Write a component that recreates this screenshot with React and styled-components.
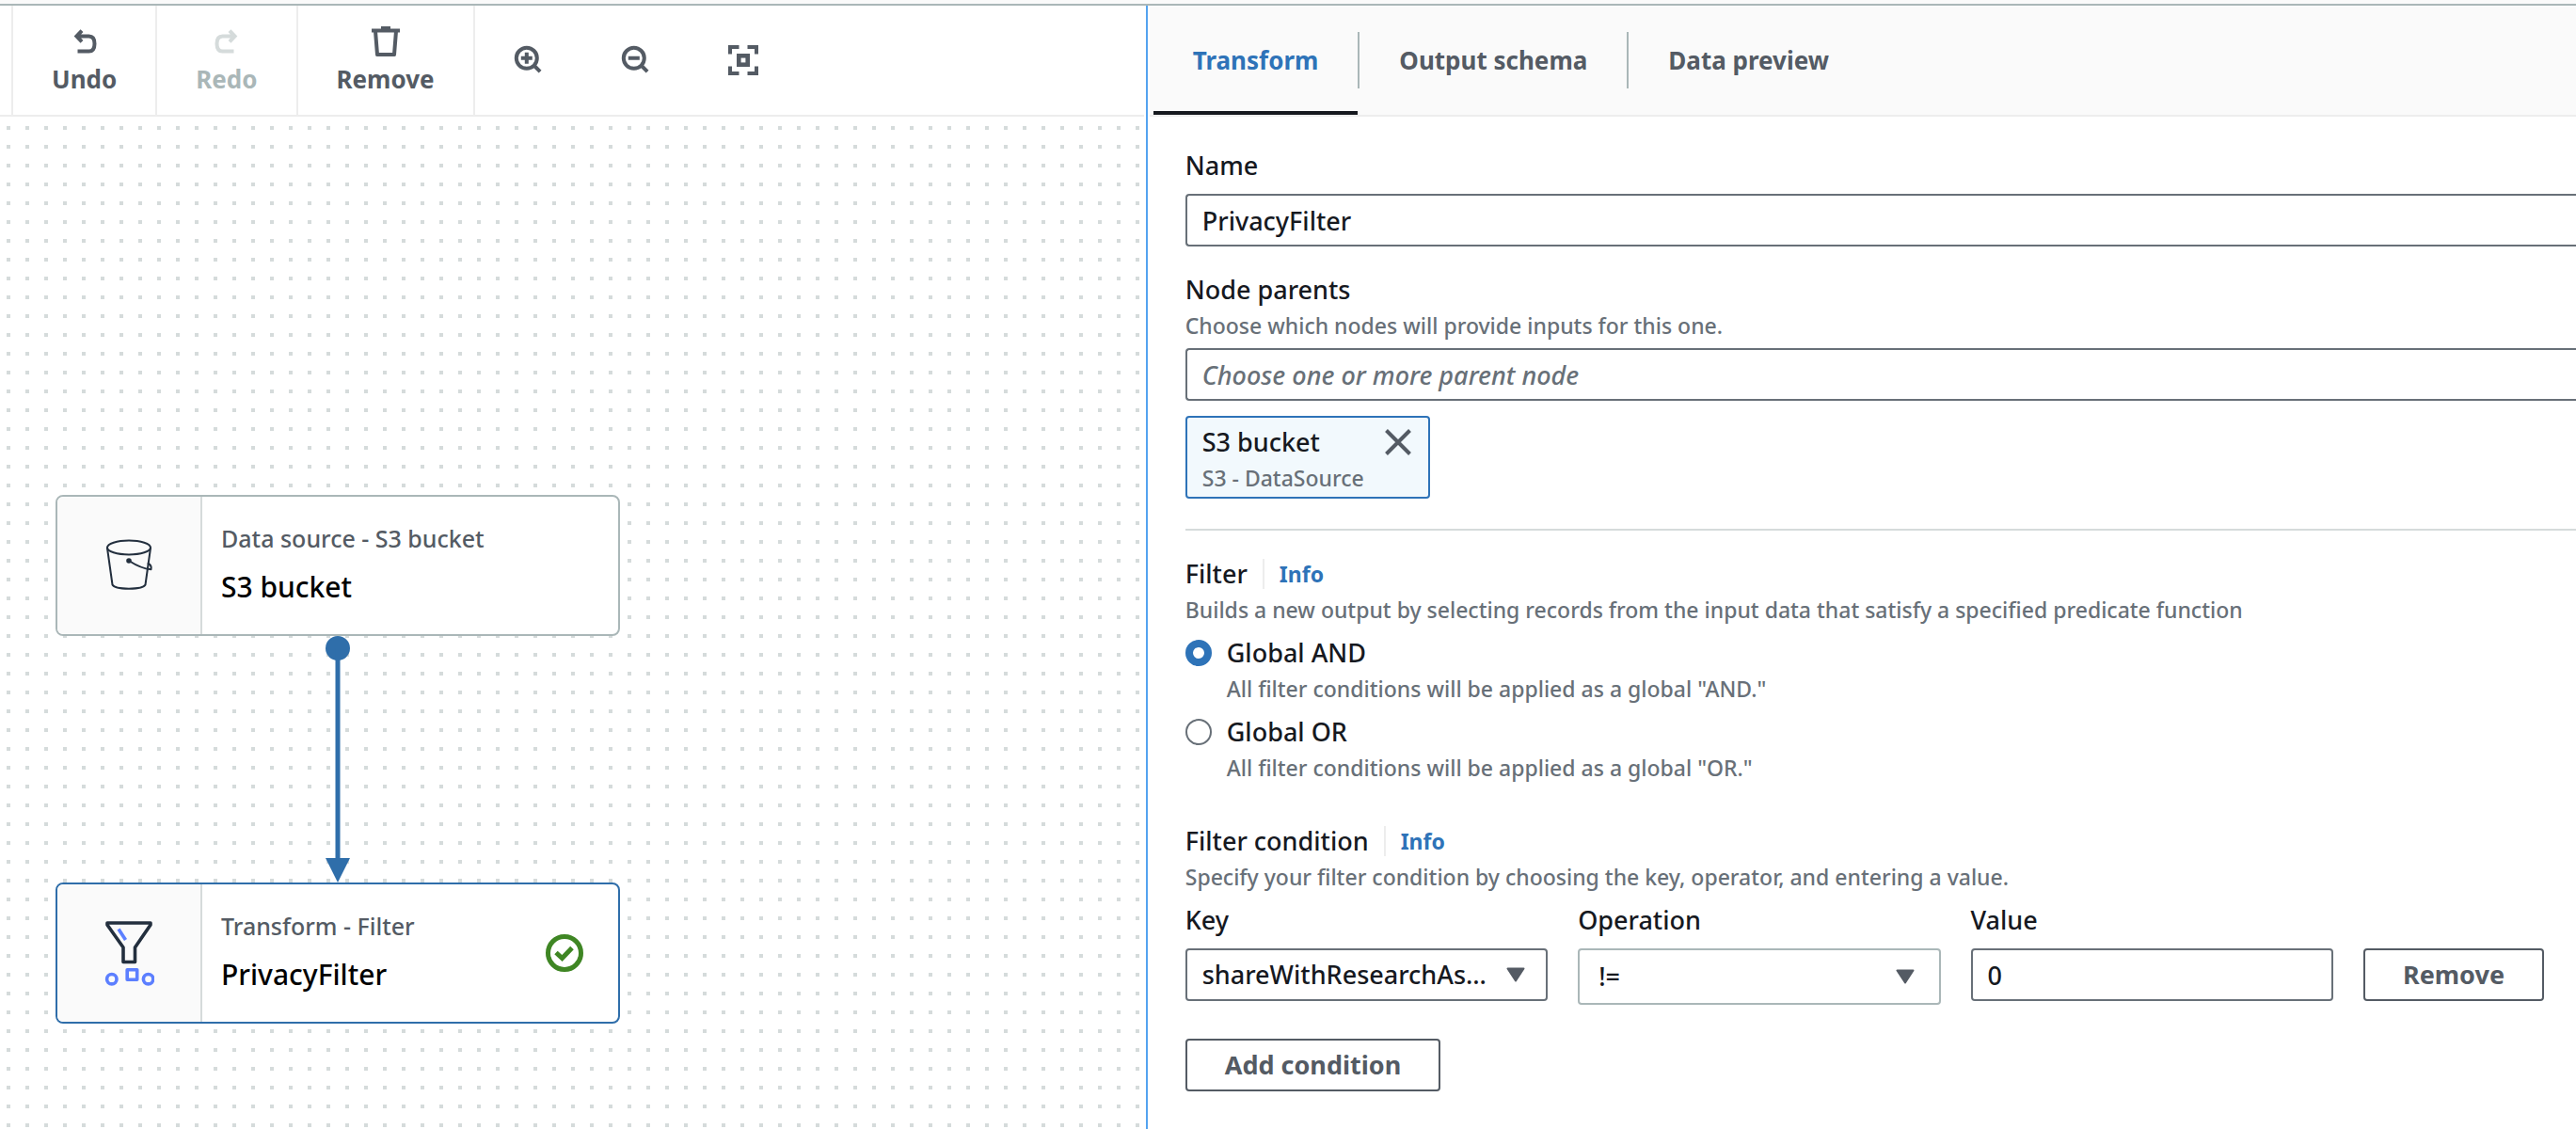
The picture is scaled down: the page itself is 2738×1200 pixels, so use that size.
import React, { useState } from "react";
import styled, { createGlobalStyle, css } from "styled-components";

const color = {
  ink: "#16191f",
  slate: "#545b64",
  hint: "#687078",
  border: "#687078",
  muted: "#aab7b8",
  faint: "#d5dbdb",
  hairline: "#ededed",
  surface: "#fafafa",
  link: "#2e73b8",
  edge: "#2f6eaa",
  success: "#3f8624",
  accent: "#5c7fff",
};

const GlobalStyle = createGlobalStyle`
  *, *::before, *::after { box-sizing: border-box; }
  body {
    margin: 0;
    background: #fff;
    color: ${color.ink};
    font-family: "Noto Sans", "Open Sans", sans-serif;
    font-size: 27px;
    font-weight: 500;
    line-height: 36px;
  }
  button, input, select { margin: 0; font: inherit; color: inherit; }
`;

/* ---------- page frame ---------- */

const Page = styled.div`
  display: flex;
  flex-direction: column;
  min-height: 100vh;
`;

const TopStrip = styled.div`
  height: 6px;
  flex: none;
  background: ${color.surface};
  border-bottom: 2px solid ${color.muted};
`;

const Split = styled.main`
  flex: 1;
  display: grid;
  grid-template-columns: minmax(0, 445fr) 6px minmax(0, 555fr);
`;

const Splitter = styled.div`
  border: solid #fff;
  border-width: 0 2px;
  background: #54a3f0;
`;

const GraphPane = styled.section`
  display: flex;
  flex-direction: column;
`;

const DetailPane = styled.section`
  display: flex;
  flex-direction: column;
  overflow: hidden;
`;

/* ---------- toolbar ---------- */

const Toolbar = styled.div`
  display: flex;
  height: 118px;
  padding-left: 12px;
  border-bottom: 2px solid ${color.hairline};
`;

const ToolButton = styled.button`
  display: flex;
  flex-direction: column;
  align-items: center;
  gap: 6px;
  padding: 22px 41px 0;
  border: 0;
  border-left: 2px solid ${color.hairline};
  background: none;
  color: ${color.slate};
  font-size: 26px;
  font-weight: 700;

  &:disabled {
    color: ${color.muted};
  }
  &:disabled svg {
    color: ${color.faint};
  }
`;

const ZoomGroup = styled.div`
  display: flex;
  border-left: 2px solid ${color.hairline};
`;

const IconButton = styled.button`
  display: flex;
  align-items: center;
  justify-content: center;
  width: 114px;
  padding: 0;
  border: 0;
  background: none;
  color: ${color.slate};
`;

/* ---------- graph ---------- */

const Canvas = styled.div`
  flex: 1;
  position: relative;
  overflow: hidden;
  background-image: conic-gradient(from 90deg at 16px 16px, ${color.faint} 90deg, transparent 0);
  background-size: 20px 20px;
  background-position: -9px -6px;
`;

const Node = styled.article`
  position: absolute;
  left: 59px;
  top: ${(p) => p.$top}px;
  display: flex;
  width: 600px;
  height: 150px;
  overflow: hidden;
  border: 2px solid ${(p) => (p.$selected ? color.edge : color.muted)};
  border-radius: 8px;
  background: #fff;
`;

const NodeIcon = styled.div`
  flex: none;
  display: flex;
  align-items: center;
  justify-content: center;
  width: 154px;
  background: ${color.surface};
  border-right: 2px solid ${color.faint};
`;

const NodeText = styled.div`
  flex: 1;
  display: flex;
  flex-direction: column;
  justify-content: center;
  gap: 14px;
  padding: 0 20px 4px;
`;

const NodeKind = styled.div`
  color: ${color.slate};
  font-size: 25px;
`;

const NodeTitle = styled.div`
  color: #000;
  font-size: 30px;
  line-height: 40px;
`;

const NodeStatus = styled.div`
  display: flex;
  align-items: center;
  padding-right: 36px;
`;

const Edge = styled.svg`
  position: absolute;
  left: 345px;
  top: 552px;
`;

/* ---------- tabs ---------- */

const TabBar = styled.div`
  display: flex;
  flex: none;
  height: 118px;
  padding-left: 4px;
  background: ${color.surface};
  border-bottom: 2px solid ${color.hairline};
`;

const Tab = styled.button`
  padding: 4px 42px 0;
  border: 0;
  border-bottom: 4px solid ${(p) => (p.$active ? color.ink : "transparent")};
  background: none;
  color: ${(p) => (p.$active ? color.link : color.slate)};
  font-size: 26px;
  font-weight: 700;
`;

const TabDivider = styled.div`
  width: 2px;
  margin: 28px 0;
  background: ${color.muted};
`;

/* ---------- form ---------- */

const Form = styled.form`
  padding: 34px 0 36px 38px;
`;

const Field = styled.div`
  display: flex;
  flex-direction: column;
  gap: 12px;
  margin-bottom: 28px;
`;

const Heading = styled.div`
  display: flex;
  flex-direction: column;
  gap: 2px;
`;

const TitleRow = styled.div`
  display: flex;
  align-items: center;
  gap: 16px;
`;

const Title = styled.h3`
  margin: 0;
  font-size: 27px;
  font-weight: inherit;
`;

const InfoLink = styled.a`
  padding-left: 16px;
  border-left: 2px solid ${color.hairline};
  color: ${color.link};
  font-size: 23px;
  font-weight: 700;
  line-height: 32px;
  text-decoration: none;
`;

const Hint = styled.div`
  color: ${color.hint};
  font-size: 23px;
`;

const control = css`
  width: 100%;
  height: 56px;
  border: 2px solid ${color.border};
  border-radius: 4px;
  background: #fff;
`;

const TextInput = styled.input`
  ${control}
  padding: 0 16px;
  outline: none;

  ${(p) =>
    p.$bleed &&
    css`
      border-right: 0;
      border-radius: 4px 0 0 4px;
    `}

  &::placeholder {
    color: ${color.hint};
    font-style: italic;
    opacity: 1;
  }
`;

const ParentPicker = styled.div`
  display: flex;
  flex-direction: column;
  align-items: flex-start;
  gap: 16px;
  padding-top: 6px;
`;

const Token = styled.div`
  display: flex;
  justify-content: space-between;
  align-items: flex-start;
  width: 260px;
  height: 88px;
  padding: 8px 18px 0 16px;
  border: 2px solid ${color.link};
  border-radius: 4px;
  background: #f2f9fd;
`;

const TokenClose = styled.button`
  display: flex;
  padding: 4px 0;
  border: 0;
  background: none;
  color: ${color.slate};
`;

const Rule = styled.hr`
  height: 2px;
  margin: 32px 0 28px;
  border: 0;
  background: ${color.faint};
`;

const RadioList = styled.div`
  display: flex;
  flex-direction: column;
  gap: 10px;
  margin: 10px 0 42px;
`;

const RadioOption = styled.div`
  display: grid;
  grid-template-columns: 28px 1fr;
  column-gap: 16px;
  row-gap: 2px;
  align-items: center;
`;

const Radio = styled.input`
  appearance: none;
  width: 28px;
  height: 28px;
  border: 2px solid ${color.border};
  border-radius: 50%;
  background: #fff;

  &:checked {
    border: 8px solid ${color.link};
  }
`;

const RadioHint = styled(Hint)`
  grid-column: 2;
`;

const ConditionRow = styled.div`
  display: grid;
  grid-template-columns: repeat(3, minmax(0, 1fr)) auto;
  gap: 12px 32px;
  padding: 10px 34px 0 0;
`;

const ConditionField = styled.div`
  display: grid;
  grid-row: span 2;
  grid-template-rows: subgrid;
`;

const SelectBox = styled.div`
  display: grid;
  align-items: center;
  height: ${(p) => (p.$tall ? 60 : 56)}px;

  > * {
    grid-area: 1 / 1;
  }
  > svg {
    justify-self: end;
    margin-right: ${(p) => (p.$tall ? 28 : 24)}px;
    pointer-events: none;
  }
`;

const Select = styled.select`
  ${control}
  height: 100%;
  padding: 0 60px 0 ${(p) => (p.$tall ? 20 : 16)}px;
  border-color: ${(p) => (p.$tall ? color.muted : color.border)};
  appearance: none;
  text-overflow: ellipsis;
`;

const Button = styled.button`
  height: 56px;
  padding: 0 40px;
  border: 2px solid ${color.slate};
  border-radius: 4px;
  background: #fff;
  color: ${color.slate};
  font-weight: 700;
`;

const RowButton = styled(Button)`
  grid-row: 2;
  grid-column: 4;
`;

const Actions = styled.div`
  padding-top: 36px;
`;

/* ---------- icons ---------- */

const Icon = ({ children, size = 32 }) => (
  <svg width={size} height={size} viewBox={`0 0 ${size} ${size}`} fill="none" stroke="currentColor" strokeWidth="4" aria-hidden="true">
    {children}
  </svg>
);

const UndoIcon = () => (
  <Icon>
    <path d="M13 4.6 7.4 10.5 13 16.4M8 10.5h12.5c4 0 6 3 6 8s-2 8-6 8H8.5" />
  </Icon>
);

const RedoIcon = () => (
  <Icon>
    <path d="M19 4.6 24.6 10.5 19 16.4M24 10.5H11.5c-4 0-6 3-6 8s2 8 6 8h12" />
  </Icon>
);

const TrashIcon = () => (
  <Icon>
    <path d="M1 4.5h30M11 2h10M5 5l2 25h18l2-25" strokeLinejoin="round" />
  </Icon>
);

const ZoomInIcon = () => (
  <Icon>
    <circle cx="13.8" cy="13.8" r="11" />
    <path d="M21.5 21.5l6.6 6.6M7.8 13.8h12M13.8 7.8v12" />
  </Icon>
);

const ZoomOutIcon = () => (
  <Icon>
    <circle cx="13.8" cy="13.8" r="11" />
    <path d="M21.5 21.5l6.6 6.6M7.8 13.8h12" />
  </Icon>
);

const FitIcon = () => (
  <Icon>
    <path d="M2 9.5V2h9.5M20.5 2H30v7.5M30 22.5V30h-9.5M11.5 30H2v-7.5" />
    <rect x="11.3" y="11.3" width="9.4" height="9.4" strokeWidth="4.6" />
  </Icon>
);

const CloseIcon = () => (
  <Icon size={28}>
    <path d="M1.5 1.5l25 25M26.5 1.5l-25 25" />
  </Icon>
);

const Caret = () => (
  <svg width="20" height="16" viewBox="0 0 20 16" aria-hidden="true">
    <path d="M1.5 1.5h17L10 14.5z" fill={color.slate} stroke={color.slate} strokeWidth="2" strokeLinejoin="round" />
  </svg>
);

const BucketIcon = () => (
  <svg width="54" height="56" viewBox="0 0 54 56" fill="none" stroke="#232f3e" strokeWidth="2" strokeLinejoin="round" strokeLinecap="round" aria-hidden="true">
    <ellipse cx="27" cy="9" rx="23" ry="7.5" />
    <path d="M4 9.500l5.500 39C12 54 42 54 44.500 48.500L50 9.500" />
    <circle cx="27" cy="23" r="1.800" fill="#232f3e" />
    <path d="M27 23c7 4.500 15 8.500 23.500 9.300.6-2.500-.4-5-3-6.300" />
  </svg>
);

const FunnelIcon = () => (
  <svg width="54" height="72" viewBox="0 0 54 72" fill="none" strokeWidth="3.600" strokeLinejoin="round" aria-hidden="true">
    <path d="M4 4h46v2L33.500 30v15.500H21V30L4 6z" stroke="#232f3e" />
    <g stroke={color.accent}>
      <path d="M16 10.500l7.500 11.500" />
      <circle cx="8.800" cy="63.700" r="5.200" />
      <circle cx="47.600" cy="63.700" r="5.200" />
      <rect x="25.200" y="53.700" width="10.500" height="10.500" />
    </g>
  </svg>
);

const CheckIcon = () => (
  <svg width="42" height="42" viewBox="0 0 42 42" fill="none" stroke={color.success} strokeWidth="5" aria-hidden="true">
    <circle cx="21" cy="21" r="17.500" />
    <path d="M12 20.500l6.500 6L29 15.500" />
  </svg>
);

const Connector = () => (
  <Edge width="28" height="262" viewBox="0 0 28 262" fill={color.edge} aria-hidden="true">
    <circle cx="14" cy="13" r="13" />
    <path d="M11.500 13h5v225h-5zM1 236h26L14 262z" />
  </Edge>
);

/* ---------- app ---------- */

const filterModes = [
  { id: "and", label: "Global AND", hint: 'All filter conditions will be applied as a global "AND."' },
  { id: "or", label: "Global OR", hint: 'All filter conditions will be applied as a global "OR."' },
];

function GraphNode({ top, kind, title, icon, selected, status }) {
  return (
    <Node $top={top} $selected={selected}>
      <NodeIcon>{icon}</NodeIcon>
      <NodeText>
        <NodeKind>{kind}</NodeKind>
        <NodeTitle>{title}</NodeTitle>
      </NodeText>
      {status && <NodeStatus>{status}</NodeStatus>}
    </Node>
  );
}

function SectionTitle({ title, hint }) {
  return (
    <Heading>
      <TitleRow>
        <Title>{title}</Title>
        <InfoLink href="#info">Info</InfoLink>
      </TitleRow>
      <Hint>{hint}</Hint>
    </Heading>
  );
}

export default function App() {
  const [name, setName] = useState("PrivacyFilter");
  const [mode, setMode] = useState("and");
  const [value, setValue] = useState("0");

  return (
    <Page>
      <GlobalStyle />
      <TopStrip />
      <Split>
        <GraphPane>
          <Toolbar>
            <ToolButton type="button">
              <UndoIcon />
              Undo
            </ToolButton>
            <ToolButton type="button" disabled>
              <RedoIcon />
              Redo
            </ToolButton>
            <ToolButton type="button">
              <TrashIcon />
              Remove
            </ToolButton>
            <ZoomGroup>
              <IconButton type="button" aria-label="Zoom in">
                <ZoomInIcon />
              </IconButton>
              <IconButton type="button" aria-label="Zoom out">
                <ZoomOutIcon />
              </IconButton>
              <IconButton type="button" aria-label="Fit to screen">
                <FitIcon />
              </IconButton>
            </ZoomGroup>
          </Toolbar>
          <Canvas>
            <GraphNode top={402} kind="Data source - S3 bucket" title="S3 bucket" icon={<BucketIcon />} />
            <Connector />
            <GraphNode top={814} kind="Transform - Filter" title="PrivacyFilter" icon={<FunnelIcon />} status={<CheckIcon />} selected />
          </Canvas>
        </GraphPane>

        <Splitter />

        <DetailPane>
          <TabBar role="tablist">
            <Tab type="button" role="tab" aria-selected="true" $active>
              Transform
            </Tab>
            <TabDivider />
            <Tab type="button" role="tab" aria-selected="false">
              Output schema
            </Tab>
            <TabDivider />
            <Tab type="button" role="tab" aria-selected="false">
              Data preview
            </Tab>
          </TabBar>

          <Form onSubmit={(e) => e.preventDefault()}>
            <Field>
              <label htmlFor="node-name">Name</label>
              <TextInput id="node-name" $bleed value={name} onChange={(e) => setName(e.target.value)} />
            </Field>

            <Heading>
              <label htmlFor="node-parents">Node parents</label>
              <Hint>Choose which nodes will provide inputs for this one.</Hint>
            </Heading>
            <ParentPicker>
              <TextInput id="node-parents" $bleed placeholder="Choose one or more parent node" />
              <Token>
                <Heading>
                  <span>S3 bucket</span>
                  <Hint>S3 - DataSource</Hint>
                </Heading>
                <TokenClose type="button" aria-label="Remove S3 bucket">
                  <CloseIcon />
                </TokenClose>
              </Token>
            </ParentPicker>

            <Rule />

            <SectionTitle
              title="Filter"
              hint="Builds a new output by selecting records from the input data that satisfy a specified predicate function"
            />
            <RadioList>
              {filterModes.map((m) => (
                <RadioOption key={m.id}>
                  <Radio type="radio" name="mode" id={`mode-${m.id}`} checked={mode === m.id} onChange={() => setMode(m.id)} />
                  <label htmlFor={`mode-${m.id}`}>{m.label}</label>
                  <RadioHint>{m.hint}</RadioHint>
                </RadioOption>
              ))}
            </RadioList>

            <SectionTitle
              title="Filter condition"
              hint="Specify your filter condition by choosing the key, operator, and entering a value."
            />
            <ConditionRow>
              <ConditionField>
                <label htmlFor="cond-key">Key</label>
                <SelectBox>
                  <Select id="cond-key">
                    <option>shareWithResearchAs…</option>
                  </Select>
                  <Caret />
                </SelectBox>
              </ConditionField>
              <ConditionField>
                <label htmlFor="cond-op">Operation</label>
                <SelectBox $tall>
                  <Select id="cond-op" $tall>
                    <option>!=</option>
                  </Select>
                  <Caret />
                </SelectBox>
              </ConditionField>
              <ConditionField>
                <label htmlFor="cond-value">Value</label>
                <TextInput id="cond-value" value={value} onChange={(e) => setValue(e.target.value)} />
              </ConditionField>
              <RowButton type="button">Remove</RowButton>
            </ConditionRow>
            <Actions>
              <Button type="button">Add condition</Button>
            </Actions>
          </Form>
        </DetailPane>
      </Split>
    </Page>
  );
}
